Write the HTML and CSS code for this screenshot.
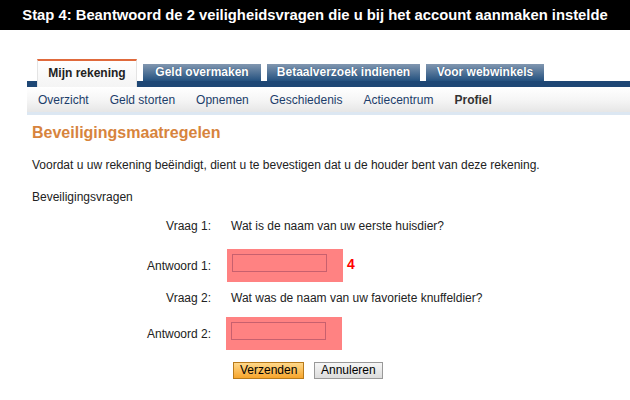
FILE: index.html
```html
<!DOCTYPE html>
<html>
<head>
<meta charset="utf-8">
<link rel="stylesheet" href="styles.css">
</head>
<body>
<div class="banner">Stap 4: Beantwoord de 2 veiligheidsvragen die u bij het account aanmaken instelde</div>
<div class="page">
  <div class="tabs">
    <div class="tab active">Mijn rekening</div>
    <div class="tab t2">Geld overmaken</div>
    <div class="tab t3">Betaalverzoek indienen</div>
    <div class="tab t4">Voor webwinkels</div>
  </div>
  <div class="subnav">
    <span class="sub">Overzicht</span>
    <span class="sub">Geld storten</span>
    <span class="sub">Opnemen</span>
    <span class="sub">Geschiedenis</span>
    <span class="sub">Actiecentrum</span>
    <span class="sub cur">Profiel</span>
  </div>
  <div class="content">
    <h1 class="title">Beveiligingsmaatregelen</h1>
    <p class="intro">Voordat u uw rekening beëindigt, dient u te bevestigen dat u de houder bent van deze rekening.</p>
    <p class="section">Beveiligingsvragen</p>
    <div class="form">
      <div class="row q"><span class="lbl">Vraag 1:</span><span class="val">Wat is de naam van uw eerste huisdier?</span></div>
      <div class="row a a1"><span class="lbl">Antwoord 1:</span><span class="hl"><span class="inp"></span></span><span class="num">4</span></div>
      <div class="row q q2"><span class="lbl">Vraag 2:</span><span class="val">Wat was de naam van uw favoriete knuffeldier?</span></div>
      <div class="row a a2"><span class="lbl">Antwoord 2:</span><span class="hl"><span class="inp"></span></span></div>
      <div class="buttons"><span class="btn primary">Verzenden</span><span class="btn">Annuleren</span></div>
    </div>
  </div>
</div>
</body>
</html>
```

FILE: styles.css
```css
html, body { margin: 0; padding: 0; background: #fff; }
body { font-family: "Liberation Sans", Arial, sans-serif; font-size: 12px; color: #222; width: 630px; height: 400px; overflow: hidden; }

.banner { background: #000; color: #fff; height: 30px; line-height: 30px; font-size: 14.8px; font-weight: bold; text-align: center; }

.page { margin-left: 27px; padding-top: 29px; }

.tabs { display: flex; align-items: flex-start; gap: 6px; padding-left: 10px; height: 28px;
  background: linear-gradient(to bottom, #fff 0, #fff 22px, #1e4775 22px, #1e4775 28px); }
.tab { font-size: 12px; font-weight: bold; box-sizing: border-box; text-align: center; }
.tab.active { height: 28px; width: 100px; border-top: 2px solid #e06a3c; background: linear-gradient(#fff, #f4f4f4); color: #222; line-height: 24px; border-left: 1px solid #e4e4e4; border-right: 1px solid #e4e4e4; }
.tab.t2, .tab.t3, .tab.t4 { margin-top: 5px; height: 17px; line-height: 17px; color: #fff; background: linear-gradient(#8197b0, #24517f); text-shadow: 0 0 1px #1b3b63; }
.t2 { width: 118px; }
.t3 { width: 153px; }
.t4 { width: 118px; }

.subnav { height: 25px; display: flex; align-items: center; gap: 21px; padding-left: 11px; background: linear-gradient(#fff, #f6f6f6 50%, #e6e6e6); border-bottom: 3px solid #dce7f2; font-size: 12px; color: #1c3d6a; }
.cur { font-weight: bold; color: #333; }

.content { padding-left: 5px; }
.title { margin: 0; padding-top: 8px; font-size: 16px; font-weight: bold; color: #d7843d; line-height: 20px; }
.intro { margin: 0; padding-top: 15px; line-height: 15px; }
.section { margin: 0; padding-top: 17px; line-height: 15px; }

.form { padding-top: 13px; }
.row { display: flex; align-items: center; }
.lbl { width: 179px; text-align: right; flex: none; }
.q { height: 15px; }
.q .val { margin-left: 20px; }
.a1 { margin-top: 16px; }
.q2 { margin-top: 8px; }
.a2 { margin-top: 12px; }
.hl { margin-left: 16px; width: 116px; height: 33px; background: #ff8282; box-sizing: border-box; padding: 5px 0 0 5px; }
.a2 .hl { margin-left: 15px; }
.inp { display: block; width: 95px; height: 18px; border: 1px solid #c8606e; box-sizing: border-box; }
.num { margin-left: 4px; color: #f00; font-weight: bold; font-size: 14px; margin-top: -3px; }

.buttons { display: flex; gap: 10px; padding-left: 201px; margin-top: 12px; }
.btn { display: block; height: 17px; line-height: 15px; box-sizing: border-box; border: 1px solid #999; background: linear-gradient(#f6f6f6, #dcdcdc); padding: 0 6px; font-size: 12px; color: #000; }
.btn.primary { border-color: #b87a1a; background: linear-gradient(#ffd88a, #f7a52c); width: 71px; text-align: center; }
```
